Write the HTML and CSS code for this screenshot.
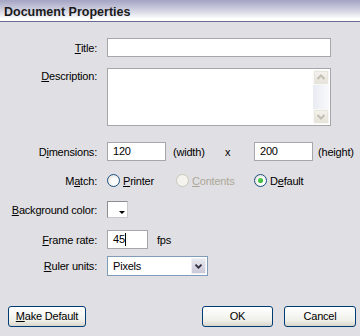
FILE: index.html
```html
<!DOCTYPE html>
<html>
<head>
  <title>Document Properties</title>
  <link rel="stylesheet" href="styles.css">
</head>
<body>
  <div class="dialog">
    <div class="titlebar">Document Properties</div>

    <div class="form">
      <div class="row row-title">
        <div class="lbl"><u>T</u>itle:</div>
        <div class="box box-title"></div>
      </div>

      <div class="row row-desc">
        <div class="lbl"><u>D</u>escription:</div>
        <div class="box box-desc">
          <div class="scroll">
            <div class="sbtn">
              <svg width="14" height="13" viewBox="0 0 14 13"><polyline points="3.5,8 7,4.5 10.5,8" fill="none" stroke="#c2bfb2" stroke-width="2"/></svg>
            </div>
            <div class="strack"></div>
            <div class="sbtn">
              <svg width="14" height="13" viewBox="0 0 14 13"><polyline points="3.5,5 7,8.5 10.5,5" fill="none" stroke="#c2bfb2" stroke-width="2"/></svg>
            </div>
          </div>
        </div>
      </div>

      <div class="row row-dim">
        <div class="lbl">D<u>i</u>mensions:</div>
        <div class="box box-dim">120</div>
        <span class="dim-unit">(width)</span>
        <span class="dim-x">x</span>
        <div class="box box-dim">200</div>
        <span class="dim-h">(height)</span>
      </div>

      <div class="row row-match">
        <div class="lbl">M<u>a</u>tch:</div>
        <div class="opt opt-printer"><span class="radio"></span><u>P</u>rinter</div>
        <div class="opt opt-contents disabled"><span class="radio"></span><u>C</u>ontents</div>
        <div class="opt"><span class="radio checked"></span>D<u>e</u>fault</div>
      </div>

      <div class="row row-bg">
        <div class="lbl"><u>B</u>ackground color:</div>
        <div class="swatch"><span class="swatch-arrow"></span></div>
      </div>

      <div class="row row-fps">
        <div class="lbl"><u>F</u>rame rate:</div>
        <div class="box box-fps">45<span class="caret"></span></div>
        <span class="fps">fps</span>
      </div>

      <div class="row row-ruler">
        <div class="lbl"><u>R</u>uler units:</div>
        <div class="select">
          <span class="select-text">Pixels</span>
          <span class="select-btn">
            <svg width="15" height="18" viewBox="0 0 15 18"><polyline points="4,7.5 7.5,11 11,7.5" fill="none" stroke="#2c2c3c" stroke-width="2"/></svg>
          </span>
        </div>
      </div>
    </div>

    <div class="footer">
      <div class="btn btn-make"><u>M</u>ake Default</div>
      <div class="btn btn-ok">OK</div>
      <div class="btn btn-cancel">Cancel</div>
    </div>
  </div>
</body>
</html>
```

FILE: styles.css
```css
body {
  margin: 0;
  background-color: #e0dfe3;
  font-family: "Liberation Sans", Arial, sans-serif;
  font-size: 11px;
  letter-spacing: -0.2px;
  color: #000;
}

.dialog {
  width: 360px;
  height: 336px;
}

.titlebar {
  height: 22px;
  box-sizing: border-box;
  padding-left: 4px;
  line-height: 25px;
  font-size: 12.5px;
  font-weight: bold;
  letter-spacing: 0;
  color: #1a1a1a;
  border-bottom: 1px solid #6c6c92;
  background: linear-gradient(#a3a3c3, #d8d8e6 55%, #ffffff 90%);
}

.form {
  padding-top: 16px;
}

.row {
  display: flex;
  align-items: center;
}

.lbl {
  width: 97px;
  margin-right: 10px;
  text-align: right;
  flex: none;
}

.box {
  box-sizing: border-box;
  height: 19px;
  background: #fff;
  border: 1px solid #a7a6ab;
  padding-left: 5px;
  line-height: 17px;
}

.box-title { width: 224px; }

.row-desc {
  margin-top: 11px;
  align-items: flex-start;
}

.row-desc .lbl {
  padding-top: 2px;
}

.box-desc {
  width: 224px;
  height: 58px;
  padding: 1px;
  display: flex;
  justify-content: flex-end;
}

.scroll {
  width: 16px;
  display: flex;
  flex-direction: column;
}

.sbtn {
  box-sizing: border-box;
  height: 15px;
  border: 1px solid #f7f7f3;
  border-radius: 2px;
  background: linear-gradient(#f4f3ef, #e4e2d8);
  box-shadow: 0 0 0 1px #e8e6dc inset;
  display: flex;
  align-items: center;
  justify-content: center;
}

.strack {
  flex: 1;
  background: linear-gradient(to right, #e9ebf3, #f8f9fc);
}

.row-dim {
  margin-top: 16px;
}

.box-dim { width: 59px; }

.dim-unit {
  width: 59px;
  box-sizing: border-box;
  padding-left: 7px;
}

.dim-x { width: 29px; }

.dim-h { margin-left: 5px; }

.row-match {
  margin-top: 10px;
  height: 19px;
}

.opt {
  display: flex;
  align-items: center;
}

.opt-printer { width: 69px; }
.opt-contents { width: 78px; }

.radio {
  width: 13px;
  height: 13px;
  box-sizing: border-box;
  border: 1px solid #1c5180;
  border-radius: 50%;
  margin-right: 3px;
  background: radial-gradient(circle at 60% 60%, #ffffff 30%, #dcdad2 90%);
  display: flex;
  align-items: center;
  justify-content: center;
}

.radio.checked::after {
  content: "";
  width: 5px;
  height: 5px;
  border-radius: 50%;
  background: radial-gradient(circle at 40% 40%, #55d855, #21a121);
}

.disabled {
  color: #aca899;
}

.disabled .radio {
  border-color: #cac8bb;
  background: #f4f3ee;
}

.row-bg {
  margin-top: 11px;
  height: 17px;
}

.swatch {
  width: 21px;
  height: 17px;
  box-sizing: border-box;
  background: #fff;
  border: 1px solid #8e8d92;
  border-right-color: #c9c8cc;
  border-bottom-color: #c9c8cc;
  display: flex;
  align-items: flex-end;
  justify-content: flex-end;
  padding: 0 2px 3px 0;
}

.swatch-arrow {
  width: 0;
  height: 0;
  border-left: 3px solid transparent;
  border-right: 3px solid transparent;
  border-top: 3px solid #000;
}

.row-fps {
  margin-top: 12px;
}

.box-fps { width: 41px; }

.caret {
  display: inline-block;
  width: 1px;
  height: 13px;
  background: #000;
  vertical-align: -3px;
}

.fps { margin-left: 9px; }

.row-ruler {
  margin-top: 7px;
}

.select {
  width: 101px;
  height: 20px;
  box-sizing: border-box;
  border: 1px solid #7f9db9;
  background: #fff;
  display: flex;
  align-items: center;
  padding: 1px;
}

.select-text {
  flex: 1;
  padding-left: 4px;
}

.select-btn {
  width: 15px;
  height: 16px;
  box-sizing: border-box;
  border: 1px solid #f0f0f6;
  background: linear-gradient(#e8e8ef, #c9c8d7);
  display: flex;
  align-items: center;
  justify-content: center;
  overflow: hidden;
}

.footer {
  margin-top: 30px;
  display: flex;
  padding: 0 4px 0 8px;
}

.btn {
  height: 21px;
  box-sizing: border-box;
  border: 1px solid #003c74;
  border-radius: 3px;
  background: linear-gradient(#ffffff, #f0f0ea 70%, #d8d5cb);
  text-align: center;
  line-height: 19px;
}

.btn-make { width: 78px; }

.btn-ok {
  width: 71px;
  margin-left: auto;
}

.btn-cancel {
  width: 72px;
  margin-left: 11px;
}
```
